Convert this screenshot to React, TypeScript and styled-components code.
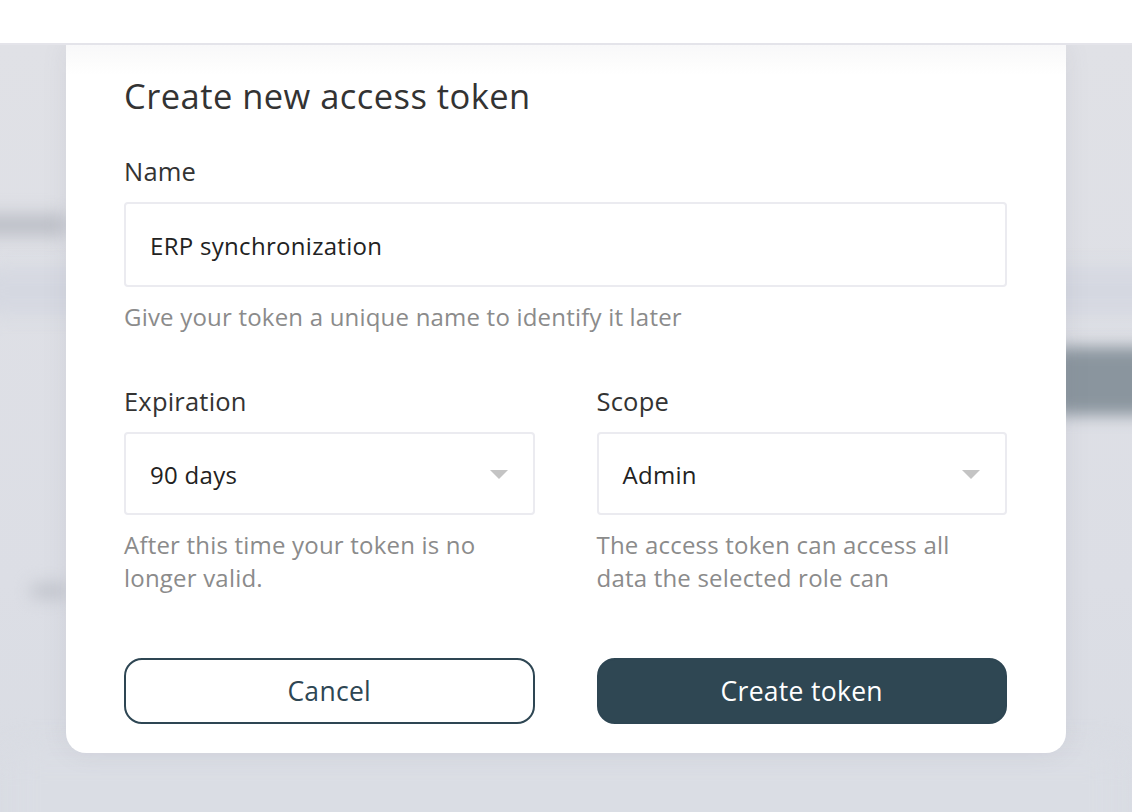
import styled, { createGlobalStyle } from "styled-components";

const GlobalStyle = createGlobalStyle`
  html, body {
    margin: 0;
    padding: 0;
    height: 100%;
  }
  body {
    font-family: "Open Sans", "Noto Sans", Arial, sans-serif;
    background: #dfe0e6;
    overflow: hidden;
  }
  * {
    box-sizing: border-box;
  }
`;

const Page = styled.div`
  display: flex;
  flex-direction: column;
  width: 1132px;
  height: 812px;
`;

const Header = styled.header`
  height: 45px;
  flex: none;
  background: #fff;
  border-bottom: 2px solid #e4e4ea;
  position: relative;
  z-index: 2;
`;

const Stage = styled.div`
  position: relative;
  flex: 1;
  overflow: hidden;
  background: linear-gradient(180deg, #e0e1e6 0%, #dcdee5 70%, #d9dce3 100%);
`;

/* blurred page content sitting behind the dialog */
const Blur = styled.div<{ $top: number; $left: number; $w: number; $h: number; $c: string; $b: number }>`
  position: absolute;
  top: ${(p) => p.$top}px;
  left: ${(p) => p.$left}px;
  width: ${(p) => p.$w}px;
  height: ${(p) => p.$h}px;
  background: ${(p) => p.$c};
  border-radius: 14px;
  filter: blur(${(p) => p.$b}px);
`;

const Overlay = styled.div`
  position: relative;
  z-index: 1;
  display: flex;
  justify-content: center;
`;

const Modal = styled.div`
  width: 1000px;
  background: #fff;
  border-radius: 0 0 20px 20px;
  padding: 29px 59px 29px 58px;
  box-shadow: 0 0 24px rgba(120, 125, 140, 0.12);
  background-image: linear-gradient(180deg, #f8f8f9 0px, #fdfdfd 22px, #fff 30px);
`;

const Title = styled.h1`
  margin: 0 0 37px;
  font-size: 34.5px;
  line-height: 44px;
  font-weight: 400;
  letter-spacing: 0.45px;
  color: #333;
`;

const Field = styled.div`
  display: flex;
  flex-direction: column;
`;

const Label = styled.label`
  font-size: 25.5px;
  line-height: 32px;
  letter-spacing: 0.2px;
  color: #333;
  margin-bottom: 15px;
`;

const Box = styled.div<{ $h: number }>`
  height: ${(p) => p.$h}px;
  border: 2px solid #ebebf0;
  border-radius: 4px;
  display: flex;
  align-items: center;
  justify-content: space-between;
  padding: 1px 25px 0 24px;
  font-size: 24px;
  letter-spacing: 0.3px;
  color: #222;
`;

const Caret = styled.span`
  width: 0;
  height: 0;
  border-left: 9px solid transparent;
  border-right: 9px solid transparent;
  border-top: 9px solid #c4c4c4;
`;

const Help = styled.p`
  margin: 13px 0 0;
  padding-right: 6px;
  font-size: 24px;
  line-height: 33px;
  letter-spacing: 0.2px;
  color: #8b8b8b;
`;

const Row = styled.div`
  display: grid;
  grid-template-columns: 1fr 1fr;
  column-gap: 62px;
  margin-top: 52px;
`;

const Actions = styled.div`
  display: grid;
  grid-template-columns: 1fr 1fr;
  column-gap: 62px;
  margin-top: 64px;
`;

const Button = styled.button<{ $primary?: boolean }>`
  height: 66px;
  border-radius: 18px;
  font-family: inherit;
  font-size: 26.5px;
  letter-spacing: 0.3px;
  border: 2px solid #2e4653;
  background: ${(p) => (p.$primary ? "#2f4753" : "#fff")};
  color: ${(p) => (p.$primary ? "#fff" : "#2e4653")};
  cursor: pointer;
`;

export default function App() {
  return (
    <Page>
      <GlobalStyle />
      <Header />
      <Stage>
        <Blur $top={170} $left={-40} $w={110} $h={20} $c="#b9bcc4" $b={9} />
        <Blur $top={222} $left={-20} $w={1200} $h={48} $c="#d5d8e1" $b={10} />
        <Blur $top={302} $left={1050} $w={120} $h={68} $c="#8a959e" $b={8} />
        <Blur $top={538} $left={30} $w={40} $h={16} $c="#c3c6ce" $b={8} />
        <Blur $top={705} $left={10} $w={1110} $h={120} $c="#dadde4" $b={14} />
        <Overlay>
          <Modal>
            <Title>Create new access token</Title>
            <Field>
              <Label>Name</Label>
              <Box $h={85}>ERP synchronization</Box>
              <Help>Give your token a unique name to identify it later</Help>
            </Field>
            <Row>
              <Field>
                <Label>Expiration</Label>
                <Box $h={83}>
                  90 days
                  <Caret />
                </Box>
                <Help>After this time your token is no longer valid.</Help>
              </Field>
              <Field>
                <Label>Scope</Label>
                <Box $h={83}>
                  Admin
                  <Caret />
                </Box>
                <Help>The access token can access all data the selected role can</Help>
              </Field>
            </Row>
            <Actions>
              <Button>Cancel</Button>
              <Button $primary>Create token</Button>
            </Actions>
          </Modal>
        </Overlay>
      </Stage>
    </Page>
  );
}
